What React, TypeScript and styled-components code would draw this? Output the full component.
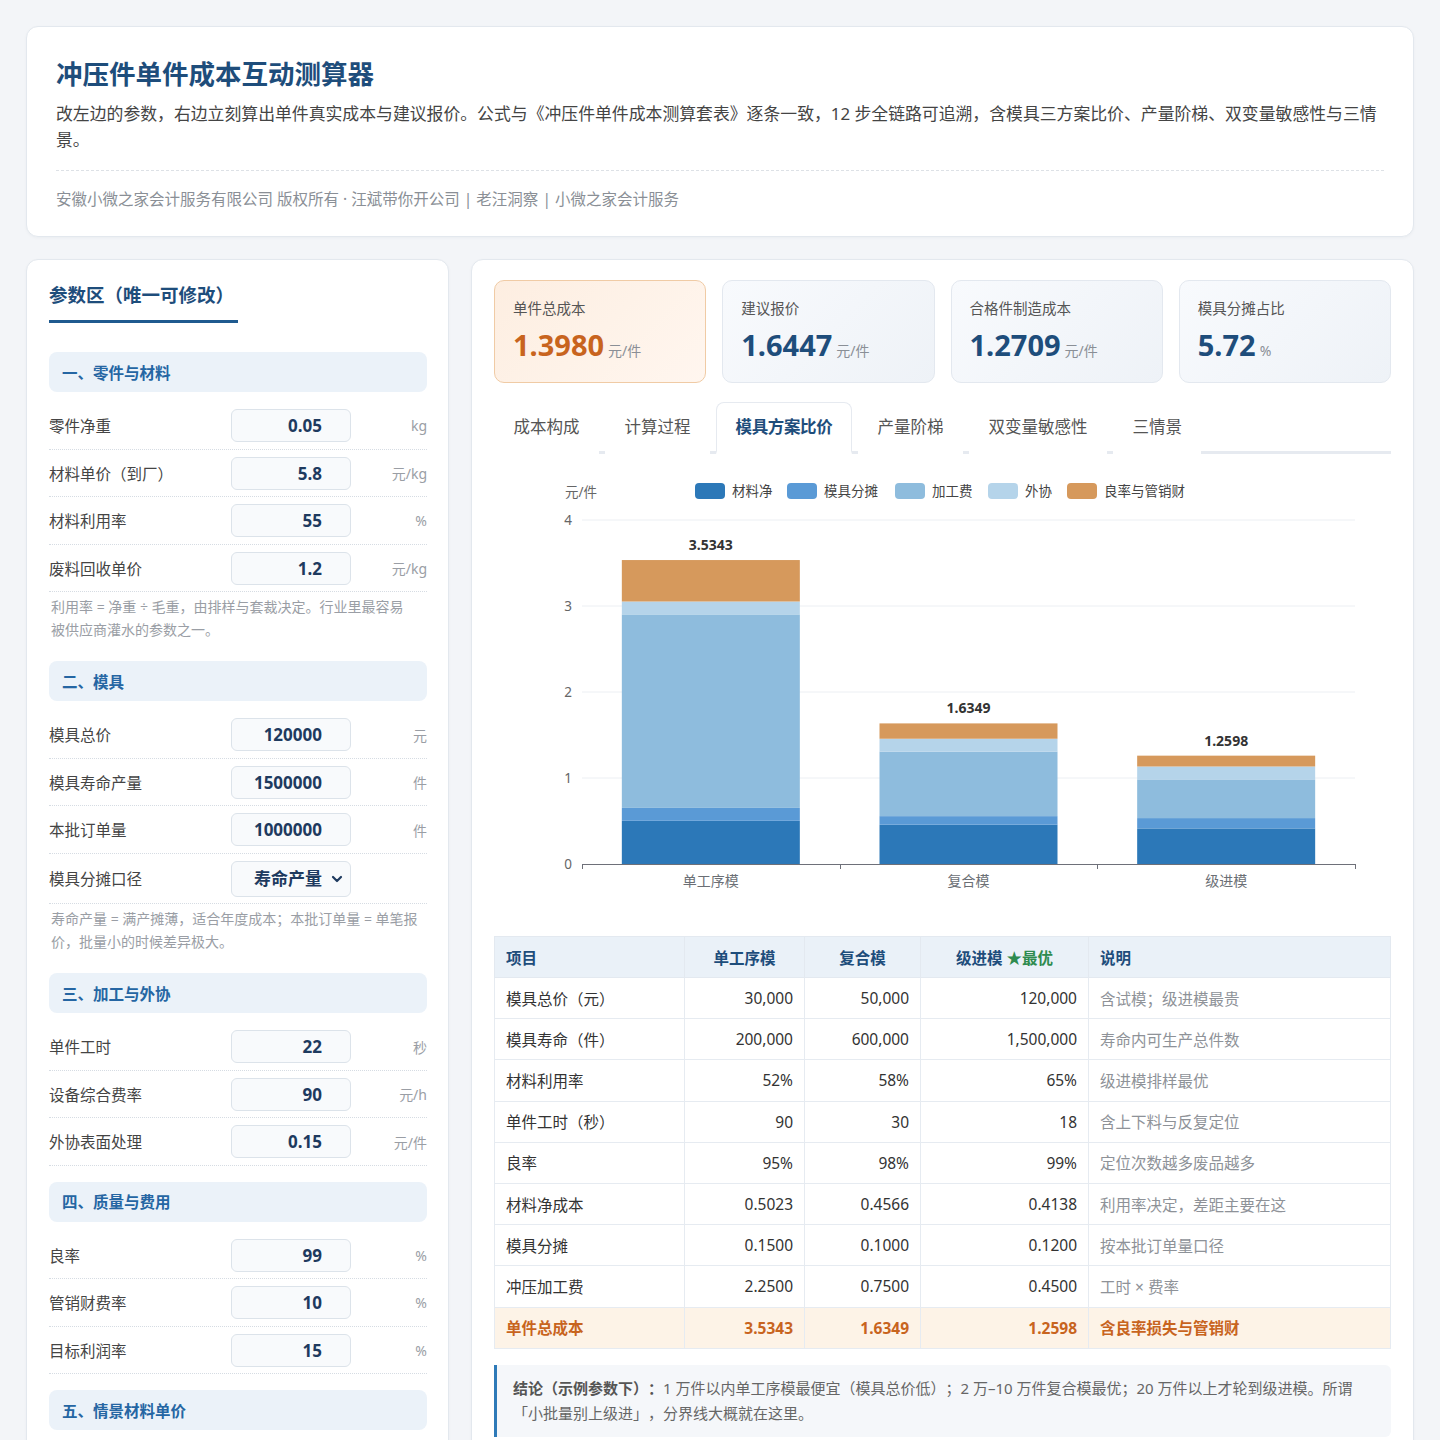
import React from "react";
import styled, { createGlobalStyle } from "styled-components";

const GlobalStyle = createGlobalStyle`
  html, body { margin: 0; padding: 0; background: #f3f5f8; }
  body {
    font-family: "Noto Sans", "Noto Sans CJK SC", sans-serif;
    color: #333;
    text-spacing-trim: space-all;
  }
  * { box-sizing: border-box; }
`;

const Page = styled.div`
  padding: 26px;
  display: flex;
  flex-direction: column;
  gap: 22px;
`;

const Card = styled.section`
  background: #fff;
  border: 1px solid #e3e8ee;
  border-radius: 12px;
  box-shadow: 0 1px 3px rgba(20, 40, 80, 0.04);
`;

const Header = styled(Card)`
  padding: 30px 29px 25px;
`;

const Title = styled.h1`
  margin: 0;
  font-size: 26.5px;
  line-height: 34px;
  font-weight: 700;
  color: #1e4d7b;
`;

const Lead = styled.p`
  margin: 10px 0 0;
  font-size: 16.85px;
  line-height: 26px;
  color: #444;
`;

const Divider = styled.div`
  border-top: 1px dashed #dde1e6;
  margin: 17px 0 16px;
`;

const Credit = styled.div`
  font-size: 15.5px;
  line-height: 24px;
  color: #8a8f96;
`;

const Main = styled.div`
  display: grid;
  grid-template-columns: 423px 1fr;
  gap: 22px;
  align-items: start;
`;

const Side = styled(Card)`
  padding: 22px 21px 22px 22px;
`;

const SideTitle = styled.h2`
  display: inline-block;
  margin: 0 0 29px;
  padding: 0 4px 12px 0;
  font-size: 18.5px;
  line-height: 26px;
  font-weight: 700;
  color: #1e4d7b;
  border-bottom: 3px solid #1f5a8f;
`;

const Group = styled.div`
  display: flow-root;
  margin-bottom: 16px;
`;

const SectionHead = styled.div`
  height: 40px;
  display: flex;
  align-items: center;
  padding: 0 13px;
  margin-bottom: 10px;
  background: #ebf2f9;
  border-radius: 8px;
  font-size: 15.5px;
  font-weight: 700;
  color: #2566a3;
`;

const Row = styled.div`
  display: grid;
  grid-template-columns: 1fr 120px 76px;
  align-items: center;
  padding: 7px 0 6.5px;
  border-bottom: 1px dotted #d6dce3;
`;

const Label = styled.label`
  font-size: 15.5px;
  color: #444;
`;

const NumInput = styled.input`
  width: 120px;
  height: 33px;
  border: 1px solid #dce3ea;
  border-radius: 6px;
  background: #f8fafc;
  padding: 0 28px 0 8px;
  text-align: right;
  font-family: "Noto Sans", "Noto Sans CJK SC", sans-serif;
  font-size: 17px;
  font-weight: 700;
  color: #1e3a5f;
  outline: none;
`;

const SelectWrap = styled.div`
  position: relative;
  width: 120px;
  height: 36px;
`;

const Select = styled.select`
  appearance: none;
  width: 100%;
  height: 100%;
  border: 1px solid #dce3ea;
  border-radius: 6px;
  background: #f8fafc;
  padding: 0 28px 0 8px;
  text-align-last: right;
  font-family: "Noto Sans", "Noto Sans CJK SC", sans-serif;
  font-size: 17px;
  font-weight: 700;
  color: #1e3a5f;
  outline: none;
`;

const Chevron = styled.svg`
  position: absolute;
  right: 8px;
  top: 13px;
  pointer-events: none;
`;

const Unit = styled.span`
  text-align: right;
  font-size: 14px;
  color: #9a9ea5;
`;

const Note = styled.p`
  margin: 4px 0 4px;
  padding: 0 2px;
  font-size: 14px;
  line-height: 22.5px;
  color: #9a9ea5;
`;

const Keep = styled.span`
  white-space: nowrap;
`;

const Content = styled(Card)`
  padding: 20px 22px 22px;
`;

const KpiGrid = styled.div`
  display: grid;
  grid-template-columns: repeat(4, 1fr);
  gap: 16px;
`;

const Kpi = styled.div<{ $hot?: boolean }>`
  height: 103px;
  padding: 16px 18px;
  border-radius: 10px;
  border: 1px solid ${(p) => (p.$hot ? "#f0cba5" : "#e3e8ef")};
  background: ${(p) =>
    p.$hot
      ? "linear-gradient(135deg, #fdeee1 0%, #fff6ef 100%)"
      : "linear-gradient(135deg, #f8fafd 0%, #eef2f7 100%)"};
`;

const KpiLabel = styled.div`
  font-size: 14.5px;
  line-height: 22px;
  color: #555;
`;

const KpiValue = styled.div<{ $hot?: boolean }>`
  margin-top: 8px;
  line-height: 36px;
  font-size: 29px;
  font-weight: 700;
  color: ${(p) => (p.$hot ? "#c8641e" : "#1e4d7b")};
`;

const KpiUnit = styled.span`
  margin-left: 4px;
  font-size: 14px;
  font-weight: 400;
  color: #8a8f96;
`;

const Tabs = styled.div`
  margin-top: 19px;
  display: flex;
  gap: 6px;
  border-bottom: 3px solid #e6eaf0;
`;

const Tab = styled.button<{ $active?: boolean }>`
  padding: 12px 18.5px;
  margin-bottom: -3px;
  font-family: "Noto Sans", "Noto Sans CJK SC", sans-serif;
  font-size: 16.5px;
  line-height: 24px;
  letter-spacing: ${(p) => (p.$active ? "-0.35px" : "0")};
  font-weight: ${(p) => (p.$active ? 700 : 400)};
  color: ${(p) => (p.$active ? "#1e4d7b" : "#555")};
  background: #fff;
  border: 1px solid ${(p) => (p.$active ? "#e6eaf0" : "transparent")};
  border-bottom: 3px solid ${(p) => (p.$active ? "#fff" : "transparent")};
  border-radius: 8px 8px 0 0;
  cursor: pointer;
`;

const ChartBox = styled.div`
  margin-top: 16px;
  height: 440px;
`;

const ChartSvg = styled.svg`
  display: block;
  font-family: "Noto Sans", "Noto Sans CJK SC", sans-serif;
`;

const Table = styled.table`
  margin-top: 26px;
  width: 100%;
  border-collapse: collapse;
  font-size: 15.5px;
  color: #333;
`;

const Th = styled.th<{ $align?: string }>`
  height: 41px;
  padding: 0 11px;
  background: #eaf1f8;
  border: 1px solid #e3e9f0;
  text-align: ${(p) => p.$align || "left"};
  font-weight: 700;
  color: #1e4d7b;
`;

const Best = styled.span`
  color: #2e8b4f;
`;

const Td = styled.td<{ $num?: boolean; $muted?: boolean }>`
  height: 41.2px;
  padding: 0 11px;
  border: 1px solid #e6ebf1;
  text-align: ${(p) => (p.$num ? "right" : "left")};
  color: ${(p) => (p.$muted ? "#8e9298" : "inherit")};
`;

const Tr = styled.tr<{ $total?: boolean }>`
  background: ${(p) => (p.$total ? "#fdf3e7" : "#fff")};
  color: ${(p) => (p.$total ? "#c8641e" : "#333")};
  font-weight: ${(p) => (p.$total ? 700 : 400)};
`;

const Conclusion = styled.div`
  margin-top: 16px;
  padding: 11px 16px;
  background: #f5f7fa;
  border-left: 3px solid #2e7ab8;
  border-radius: 0 6px 6px 0;
  font-size: 15px;
  line-height: 25px;
  color: #666;
`;

const Strong = styled.b`
  color: #555;
`;

type Param = { label: string; value?: string; unit?: string; select?: string };

const groups: { title: string; params: Param[]; note?: React.ReactNode }[] = [
  {
    title: "一、零件与材料",
    params: [
      { label: "零件净重", value: "0.05", unit: "kg" },
      { label: "材料单价（到厂）", value: "5.8", unit: "元/kg" },
      { label: "材料利用率", value: "55", unit: "%" },
      { label: "废料回收单价", value: "1.2", unit: "元/kg" },
    ],
    note: (
      <>
        利用率 = 净重 ÷ 毛重，由排样与套裁决定。行业里最容易<Keep>被供应商</Keep>灌水的参数之一。
      </>
    ),
  },
  {
    title: "二、模具",
    params: [
      { label: "模具总价", value: "120000", unit: "元" },
      { label: "模具寿命产量", value: "1500000", unit: "件" },
      { label: "本批订单量", value: "1000000", unit: "件" },
      { label: "模具分摊口径", select: "寿命产量" },
    ],
    note: "寿命产量 = 满产摊薄，适合年度成本；本批订单量 = 单笔报价，批量小的时候差异极大。",
  },
  {
    title: "三、加工与外协",
    params: [
      { label: "单件工时", value: "22", unit: "秒" },
      { label: "设备综合费率", value: "90", unit: "元/h" },
      { label: "外协表面处理", value: "0.15", unit: "元/件" },
    ],
  },
  {
    title: "四、质量与费用",
    params: [
      { label: "良率", value: "99", unit: "%" },
      { label: "管销财费率", value: "10", unit: "%" },
      { label: "目标利润率", value: "15", unit: "%" },
    ],
  },
  {
    title: "五、情景材料单价",
    params: [
      { label: "乐观", value: "5.2", unit: "元/kg" },
      { label: "基准", value: "5.8", unit: "元/kg" },
      { label: "悲观", value: "6.6", unit: "元/kg" },
    ],
  },
];

const kpis = [
  { label: "单件总成本", value: "1.3980", unit: "元/件", hot: true },
  { label: "建议报价", value: "1.6447", unit: "元/件" },
  { label: "合格件制造成本", value: "1.2709", unit: "元/件" },
  { label: "模具分摊占比", value: "5.72", unit: "%" },
];

const tabs = ["成本构成", "计算过程", "模具方案比价", "产量阶梯", "双变量敏感性", "三情景"];

const series = [
  { name: "材料净", color: "#2c78b8", x: 201 },
  { name: "模具分摊", color: "#5a9ad6", x: 293 },
  { name: "加工费", color: "#8ebcdd", x: 401 },
  { name: "外协", color: "#b5d4ea", x: 494 },
  { name: "良率与管销财", color: "#d6995c", x: 573 },
];

const bars = [
  { name: "单工序模", values: [0.5023, 0.15, 2.25, 0.15, 0.482], total: "3.5343" },
  { name: "复合模", values: [0.4566, 0.1, 0.75, 0.15, 0.1783], total: "1.6349" },
  { name: "级进模", values: [0.4138, 0.12, 0.45, 0.15, 0.126], total: "1.2598" },
];

const X0 = 88;
const X1 = 861;
const Y0 = 394;
const UNIT = 86;

function Chart() {
  const catW = (X1 - X0) / 3;
  const barW = 178;
  return (
    <ChartSvg width="896" height="440" viewBox="0 0 896 440">
      <text x={71} y={27} fontSize="13.5" fill="#666">元/件</text>
      {series.map((s) => (
        <g key={s.name}>
          <rect x={s.x} y={13} width={30} height={16} rx={4} fill={s.color} />
          <text x={s.x + 37} y={26} fontSize="13.5" fill="#444">{s.name}</text>
        </g>
      ))}
      {[0, 1, 2, 3, 4].map((v) => (
        <g key={v}>
          {v > 0 && (
            <line x1={X0} x2={X1} y1={Y0 - v * UNIT} y2={Y0 - v * UNIT} stroke="#eceff3" strokeWidth="1" />
          )}
          <text x={78} y={Y0 - v * UNIT + 5} fontSize="13.5" fill="#666" textAnchor="end">
            {v}
          </text>
        </g>
      ))}
      {bars.map((b, i) => {
        const x = X0 + catW * i + (catW - barW) / 2;
        let acc = 0;
        const segs = b.values.map((v, j) => {
          const yTop = Y0 - (acc + v) * UNIT;
          const h = v * UNIT;
          acc += v;
          return <rect key={j} x={x} y={yTop} width={barW} height={h} fill={series[j].color} />;
        });
        const top = Y0 - acc * UNIT;
        return (
          <g key={b.name}>
            {segs}
            <text x={x + barW / 2} y={top - 10} fontSize="14" fontWeight="700" fill="#333" textAnchor="middle">
              {b.total}
            </text>
            <text x={x + barW / 2} y={416} fontSize="14" fill="#6b6f75" textAnchor="middle">
              {b.name}
            </text>
          </g>
        );
      })}
      <line x1={X0} x2={X1} y1={Y0 + 0.5} y2={Y0 + 0.5} stroke="#6e7079" strokeWidth="1" />
      {[0, 1, 2, 3].map((k) => {
        const tx = Math.round(X0 + catW * k) + 0.5;
        return <line key={k} x1={tx} x2={tx} y1={Y0} y2={Y0 + 5} stroke="#6e7079" strokeWidth="1" />;
      })}
    </ChartSvg>
  );
}

const rows: { item: string; a: string; b: string; c: string; note: string; total?: boolean }[] = [
  { item: "模具总价（元）", a: "30,000", b: "50,000", c: "120,000", note: "含试模；级进模最贵" },
  { item: "模具寿命（件）", a: "200,000", b: "600,000", c: "1,500,000", note: "寿命内可生产总件数" },
  { item: "材料利用率", a: "52%", b: "58%", c: "65%", note: "级进模排样最优" },
  { item: "单件工时（秒）", a: "90", b: "30", c: "18", note: "含上下料与反复定位" },
  { item: "良率", a: "95%", b: "98%", c: "99%", note: "定位次数越多废品越多" },
  { item: "材料净成本", a: "0.5023", b: "0.4566", c: "0.4138", note: "利用率决定，差距主要在这" },
  { item: "模具分摊", a: "0.1500", b: "0.1000", c: "0.1200", note: "按本批订单量口径" },
  { item: "冲压加工费", a: "2.2500", b: "0.7500", c: "0.4500", note: "工时 × 费率" },
  { item: "单件总成本", a: "3.5343", b: "1.6349", c: "1.2598", note: "含良率损失与管销财", total: true },
];

export default function App() {
  return (
    <>
      <GlobalStyle />
      <Page>
        <Header>
          <Title>冲压件单件成本互动测算器</Title>
          <Lead>
            改左边的参数，右边立刻算出单件真实成本与建议报价。公式与《冲压件单件成本测算套表》逐条一致，12 步全链路可追溯，含模具三方案比价、产量阶梯、双变量敏感性与三情景。
          </Lead>
          <Divider />
          <Credit>安徽小微之家会计服务有限公司 版权所有 · 汪斌带你开公司 | 老汪洞察 | 小微之家会计服务</Credit>
        </Header>

        <Main>
          <Side>
            <SideTitle>参数区（唯一可修改）</SideTitle>
            {groups.map((g) => (
              <Group key={g.title}>
                <SectionHead>{g.title}</SectionHead>
                {g.params.map((p) => (
                  <Row key={p.label}>
                    <Label>{p.label}</Label>
                    {p.select ? (
                      <SelectWrap>
                        <Select defaultValue={p.select}>
                          <option>寿命产量</option>
                          <option>本批订单量</option>
                        </Select>
                        <Chevron width="12" height="10" viewBox="0 0 12 10">
                          <path d="M2 3 L6 7 L10 3" fill="none" stroke="#1e3a5f" strokeWidth="2.2" strokeLinecap="round" strokeLinejoin="round" />
                        </Chevron>
                      </SelectWrap>
                    ) : (
                      <NumInput defaultValue={p.value} />
                    )}
                    <Unit>{p.unit}</Unit>
                  </Row>
                ))}
                {g.note && <Note>{g.note}</Note>}
              </Group>
            ))}
          </Side>

          <Content>
            <KpiGrid>
              {kpis.map((k) => (
                <Kpi key={k.label} $hot={k.hot}>
                  <KpiLabel>{k.label}</KpiLabel>
                  <KpiValue $hot={k.hot}>
                    {k.value}
                    <KpiUnit>{k.unit}</KpiUnit>
                  </KpiValue>
                </Kpi>
              ))}
            </KpiGrid>

            <Tabs>
              {tabs.map((t) => (
                <Tab key={t} $active={t === "模具方案比价"}>
                  {t}
                </Tab>
              ))}
            </Tabs>

            <ChartBox>
              <Chart />
            </ChartBox>

            <Table>
              <colgroup>
                <col style={{ width: 190 }} />
                <col style={{ width: 120 }} />
                <col style={{ width: 116 }} />
                <col style={{ width: 168 }} />
                <col />
              </colgroup>
              <thead>
                <tr>
                  <Th>项目</Th>
                  <Th $align="center">单工序模</Th>
                  <Th $align="center">复合模</Th>
                  <Th $align="center">
                    级进模 <Best>★最优</Best>
                  </Th>
                  <Th>说明</Th>
                </tr>
              </thead>
              <tbody>
                {rows.map((r) => (
                  <Tr key={r.item} $total={r.total}>
                    <Td>{r.item}</Td>
                    <Td $num>{r.a}</Td>
                    <Td $num>{r.b}</Td>
                    <Td $num>{r.c}</Td>
                    <Td $muted={!r.total}>{r.note}</Td>
                  </Tr>
                ))}
              </tbody>
            </Table>

            <Conclusion>
              <Strong>结论（示例参数下）：</Strong>1 万件以内单工序模最便宜（模具总价低）；2 万–10 万件复合模最优；20 万件以上才轮到级进模。所谓「小批量别上级进」，分界线大概就在这里。
            </Conclusion>
          </Content>
        </Main>
      </Page>
    </>
  );
}
